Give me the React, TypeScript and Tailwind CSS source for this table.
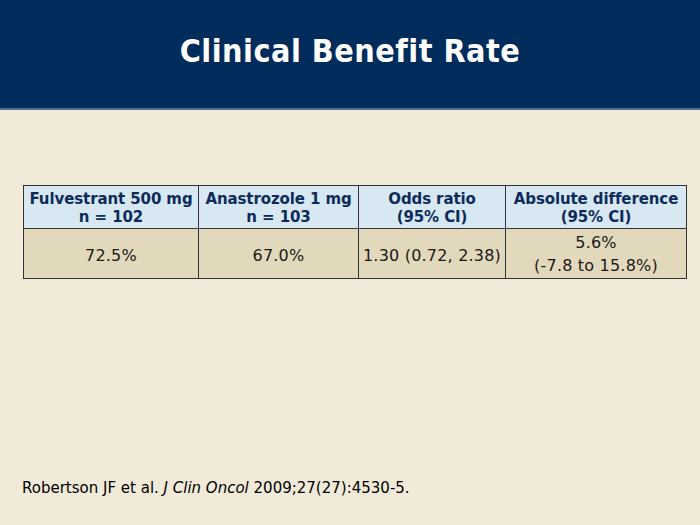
export default function App() {
  const head = "border border-[#333] px-0 pt-[2px] text-center align-middle font-bold text-[#0d2b5a] leading-[18px] text-[15px] tracking-[-0.1px] whitespace-nowrap";
  const body = "border border-[#333] px-0 text-center align-middle text-[#1a1a1a] leading-[23px] text-[16px] tracking-[0.2px] whitespace-nowrap";
  return (
    <div className="w-[700px] h-[525px] bg-[#f1ead9] flex flex-col" style={{ fontFamily: '"DejaVu Sans", Verdana, sans-serif' }}>
      <div className="h-[110px] bg-[#002c5c] border-b-2 border-[#4f6f8c] flex items-center justify-center">
        <h1 className="text-white font-bold text-[32px] tracking-[0.5px] pb-[6px]" style={{ fontFamily: '"DejaVu Sans Condensed", "DejaVu Sans", sans-serif' }}>Clinical Benefit Rate</h1>
      </div>
      <div className="pt-[75px] pl-[23px]">
        <table className="border-collapse w-[663px] table-fixed">
          <colgroup>
            <col className="w-[175px]" />
            <col className="w-[160px]" />
            <col className="w-[147px]" />
            <col className="w-[181px]" />
          </colgroup>
          <thead>
            <tr className="h-[43px] bg-[#d8e8f2]">
              <th className={head}>Fulvestrant 500 mg<br />n = 102</th>
              <th className={head}>Anastrozole 1 mg<br />n = 103</th>
              <th className={head}>Odds ratio<br />(95% CI)</th>
              <th className={head}>Absolute difference<br />(95% CI)</th>
            </tr>
          </thead>
          <tbody>
            <tr className="h-[50px] bg-[#e2d8bb]">
              <td className={body + " pt-[3px]"}>72.5%</td>
              <td className={body + " pt-[3px]"}>67.0%</td>
              <td className={body + " pt-[3px]"}>1.30 (0.72, 2.38)</td>
              <td className={body}>5.6%<br />(-7.8 to 15.8%)</td>
            </tr>
          </tbody>
        </table>
      </div>
      <div className="mt-auto mb-[26px] pl-[22px] text-[15px] text-black">
        Robertson JF et al. <i>J Clin Oncol</i> 2009;27(27):4530-5.
      </div>
    </div>
  );
}
